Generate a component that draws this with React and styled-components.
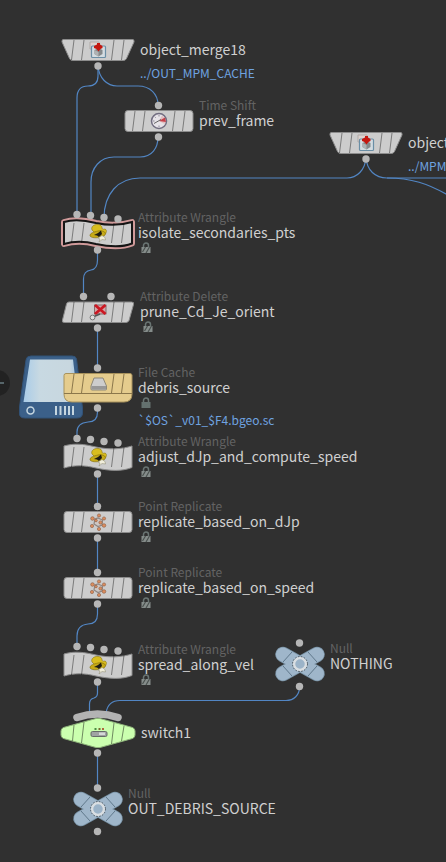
import React from 'react'
import styled, { createGlobalStyle } from 'styled-components'

const WIRES = [
  'M98 66V76Q98 86 88 86Q77 86 77 98V215',
  'M98 66C99 78 107 86 117 86H138C150 86 158 94 158 105',
  'M158 137C158 148 152 157 140 157H114C100 157 91 168 91 182V216',
  'M366 158C365 170 357 178 347 178H140C118 178 104 194 104 218',
  'M366 158C367 170 375 178 387 178H4000',
  'M387 178C412 178 428 184 446 194L640 300',
  'M97.5 250V260Q97.5 269 91 270Q83.5 271 83.5 279V296',
  'M97.5 328V367',
  'M97.5 407V412Q97.5 422 88 422Q77 423 77 432V438',
  'M97.5 474V506',
  'M97.5 538V572',
  'M97.5 604V614Q97.5 624 88 624Q77 625 77 636V646',
  'M97.5 681V693Q97.5 697 94 698Q89.5 699 89.5 704V713',
  'M299.5 687C299.5 695 294 700.5 286 700.5H120Q108 700.5 106 713',
  'M97.5 753V787',
]

const WAVE_DOTS = [[-20.5, -18.5], [-7, -17.5], [6.5, -15.5], [20.5, -14]]

// every shape is drawn round its own centre (0, 0)
const SHAPES = {
  merge: {
    width: 72,
    body: 'M-35 -10.5H35Q36.5 -10 36 -8L28.5 8.5Q27.5 10.5 25.5 10.5H-25.5Q-27.5 10.5 -28.5 8.5L-36 -8Q-36.5 -10 -35 -10.5Z',
    dots: [[0.5, 16]],
  },
  box: {
    width: 68,
    body: 'M-31 -10.5H31Q34 -10.5 34 -7.5V7.5Q34 10.5 31 10.5H-31Q-34 10.5 -34 7.5V-7.5Q-34 -10.5 -31 -10.5Z',
    dots: [[0, -15.5], [0, 16]],
  },
  wave: {
    width: 68,
    body: 'M-34 -11C-24 -14 -14 -13 -2 -10C12 -7 24 -8 34 -11V10.5C24 14.5 12 14 -2 11C-14 8 -24 8 -34 11Z',
    dots: [...WAVE_DOTS, [0, 17]],
  },
  slant: {
    width: 72,
    body: 'M-29 -10H33.5Q36.5 -10 35.5 -7.5L31 8.5Q30 10.5 28 10.5H-33.5Q-36.5 10.5 -35.5 8L-31.5 -8Q-31 -10 -29 -10Z',
    dots: [[-14, -15.5], [13.5, -15.5], [0, 16]],
  },
  cache: {
    width: 68,
    dots: [[0, -20], [0, 20]],
  },
  hex: {
    width: 74,
    body: 'M-2 -14.5H2L34.5 -5.5Q37 -4.5 37 -2V2Q37 4.5 34.5 5.5L2 14.5H-2L-34.5 5.5Q-37 4.5 -37 2V-2Q-37 -4.5 -34.5 -5.5Z',
    dots: [[0, 20]],
  },
  cross: {
    width: 48,
    dots: [[0, -21], [0, 22.5]],
  },
}

const NODES = [
  { x: 98, y: 50, shape: 'merge', icon: 'merge', name: 'object_merge18', file: '../OUT_MPM_CACHE' },
  { x: 159, y: 121, shape: 'box', icon: 'clock', kind: 'Time Shift', name: 'prev_frame' },
  { x: 366, y: 143, shape: 'merge', icon: 'merge', name: 'object_merge19', file: '../MPM_SURFACE' },
  { x: 98, y: 233, shape: 'wave', icon: 'wrangle', kind: 'Attribute Wrangle', name: 'isolate_secondaries_pts', lock: 'striped', selected: true },
  { x: 98, y: 312, shape: 'slant', icon: 'remove', kind: 'Attribute Delete', name: 'prune_Cd_Je_orient', lock: 'striped' },
  { x: 98, y: 388, shape: 'cache', kind: 'File Cache', name: 'debris_source', lock: 'solid', file: '`$OS`_v01_$F4.bgeo.sc' },
  { x: 98, y: 457, shape: 'wave', icon: 'wrangle', kind: 'Attribute Wrangle', name: 'adjust_dJp_and_compute_speed', lock: 'striped' },
  { x: 98, y: 522, shape: 'box', icon: 'points', kind: 'Point Replicate', name: 'replicate_based_on_dJp', lock: 'striped' },
  { x: 98, y: 588, shape: 'box', icon: 'points', kind: 'Point Replicate', name: 'replicate_based_on_speed', lock: 'striped' },
  { x: 98, y: 665, shape: 'wave', icon: 'wrangle', kind: 'Attribute Wrangle', name: 'spread_along_vel', lock: 'striped' },
  { x: 300, y: 664, shape: 'cross', kind: 'Null', name: 'NOTHING' },
  { x: 98, y: 733, shape: 'hex', icon: 'switch', name: 'switch1' },
  { x: 98, y: 809, shape: 'cross', kind: 'Null', name: 'OUT_DEBRIS_SOURCE' },
]

const Icon = ({ type }) => {
  switch (type) {
    case 'merge':
      return (
        <g>
          <path d="M-8 -8H1V-1H-8Z" fill="#dcd3cf" stroke="#b1aaa7" />
          <rect x="-6.5" y="-4" width="14" height="11.5" rx="1" fill="#d3dce1" stroke="#6a8ea5" strokeWidth="1.2" />
          <path d="M-3.500 0L0.5 -2L4.5 0V4L0.5 6.5L-3.5 4Z" fill="#85898b" />
          <path d="M-3.500 0L0.5 2V6.5L-3.5 4Z" fill="#aeb2b4" />
          <path d="M-1 -7H2V-5.500L4.500 -4V-2L2.500 -1L0.5 1.500L-1.500 -1L-4 -2V-4L-1 -5.500Z" fill="#c4170f" />
        </g>
      )
    case 'clock':
      return (
        <g>
          <circle r="7.5" fill="#e6e3e8" stroke="#716d80" strokeWidth="1.5" />
          <path d="M0 0L3 -5.5A6.3 6.3 0 0 1 5.5 3Z" fill="#e2bfc1" />
          <path d="M0 0L6 -3.500L7 1Z" fill="#c5404a" />
          <path d="M-5 2.500L2 -1.5" stroke="#666" />
          <path d="M0 -6V-4.5M-6 0H-4.5M0 6V4.5M-4.3 -4.3L-3.3 -3.3" stroke="#8d8996" />
        </g>
      )
    case 'wrangle':
      return (
        <g>
          <path d="M-6 -3C-8 -8 0 -10 3 -7.500C5 -5 3 -3 7 -4C10 -3 8 3 3 3L-3 0Z" fill="#d9bd1e" stroke="#88750f" strokeWidth="0.6" />
          <path d="M-8 3C-8.500 0 -4 -1 0 -2C4 -3 9 -1 7 2C4 5 -6 6 -8 3Z" fill="#c7aa17" stroke="#7d6a0c" strokeWidth="0.6" />
          <path d="M-4 2L0 0L3 -2.500L4 1L1 4L-1 2.500Z" fill="#1f1c12" />
          <path d="M0 5L4 2.500L7 4.500L7.500 7L4 6.5L1 9L2 6Z" fill="#f1eedb" stroke="#8b886f" strokeWidth="0.5" />
        </g>
      )
    case 'remove':
      return (
        <g>
          <rect x="-3.5" y="-7" width="11.500" height="9" fill="#d3a9aa" stroke="#74565a" strokeWidth="0.8" />
          <path d="M-3 -7L7.500 2M7.500 -7L-3 2" stroke="#cc1823" strokeWidth="2.8" />
          <path d="M-4 4.500L2 2" stroke="#555" strokeWidth="1.6" />
          <circle cx="-5.500" cy="5.5" r="2.4" fill="#ddd" stroke="#777" />
        </g>
      )
    case 'points':
      return (
        <g stroke="#8a5a41" strokeWidth="0.6">
          <path d="M0 -4L4.5 -2L4 3L0 4.5L-4 2L-3 -3Z" fill="#d0c8c4" stroke="#8f8580" strokeWidth="1.200" />
          <g fill="#dc8d5e">
            <circle cx="1" cy="-6.500" r="1.6" />
            <circle cx="-5.5" cy="-3.500" r="1.8" />
            <circle cx="6" cy="-3.500" r="1.6" />
            <circle cx="-6" cy="4" r="1.6" />
            <circle cx="6" cy="3.500" r="1.8" />
            <circle cx="1" cy="7" r="1.6" />
            <circle cx="2.500" cy="0.5" r="1.6" />
            <circle cx="-2" cy="-1.500" r="1.3" />
          </g>
        </g>
      )
    case 'switch':
      return (
        <g transform="translate(1 0)">
          <rect x="-8" y="-1.5" width="16" height="5" rx="1.5" fill="#9fa3a3" stroke="#656b68" />
          <path d="M0 -0.5H6V2H0Z" fill="#d5d8d8" />
          <path d="M-4.500 -4H-2.500" stroke="#4a8b42" strokeWidth="2" />
          <path d="M-0.5 -4H1.5" stroke="#7b6b31" strokeWidth="2" />
          <path d="M3 -4H5" stroke="#b0653e" strokeWidth="2" />
        </g>
      )
    default:
      return null
  }
}

const Ticks = () => (
  <path
    d="M-24 -10L-26.5 10M-14 -10L-16.5 10M16 -10L13.5 10M26 -10L23.5 10"
    stroke="#000"
    strokeOpacity="0.4"
  />
)

const CacheShape = () => (
  <g>
    <path
      d="M-67 -32H-26Q-22 -32 -21.5 -29L-15.500 20V25Q-15.500 30 -21 30H-73Q-79 30 -78.500 25V19L-72 -28Q-71.500 -32 -67 -32Z"
      fill="#3b6089"
      stroke="#315277"
    />
    <path d="M-68 -28.500H-25L-20 14H-74.500Z" fill="url(#driveLid)" />
    <circle cx="-67.500" cy="22.500" r="3.500" fill="none" stroke="#c5d6e0" strokeWidth="1.500" />
    <path d="M-42 18V27M-37.500 18V27M-33 18V27M-29 18V27M-25 18V27" stroke="#c5d6e0" strokeWidth="2" />
    <path
      d="M-32 -14.500H32Q34 -14.500 34 -12.500V6Q34 14 26 14H-26Q-34 14 -34 6V-12.500Q-34 -14.500 -32 -14.500Z"
      fill="#e5cc8d"
      stroke="#a8925c"
    />
    <path
      d="M-34 5.500H34M-24 -14L-26.500 5M-14 -14L-16.500 5M16 -14L13.500 5M26 -14L23.500 5"
      stroke="#8b774b"
      fill="none"
    />
    <path d="M-4 -10H5L8.500 -2V1Q8.500 2 7.500 2H-6Q-7 2 -7 1V-2Z" fill="#cdcdcd" stroke="#8d8878" />
    <path d="M-6.500 -2H8V1.500H-6.500Z" fill="#989898" />
  </g>
)

const CrossShape = () => (
  <g>
    <path d="M-17 -9.5L17 9.5M17 -9.5L-17 9.5" stroke="#7790a3" strokeWidth="15.500" strokeLinecap="round" />
    <path d="M-17 -9.5L17 9.5M17 -9.5L-17 9.5" stroke="#9fb6ca" strokeWidth="14" strokeLinecap="round" />
    <path d="M-17 -2L-8 -12M17 -2L8 -12M-17 2L-8 12M17 2L8 12" stroke="#60788b" />
    <circle r="6" fill="#9bb3c8" stroke="#d9dee2" strokeWidth="2.500" />
    <circle r="7.500" fill="none" stroke="#4a545c" strokeDasharray="1.500 1.500" />
  </g>
)

const Glyph = ({ node }) => {
  const shape = SHAPES[node.shape]
  const half = shape.width / 2
  return (
    <Shape width={shape.width} height="60" viewBox={`${-half} -30 ${shape.width} 60`} aria-hidden="true">
      {node.shape === 'cache' && <CacheShape />}
      {node.shape === 'cross' && <CrossShape />}
      {node.shape === 'hex' && (
        <>
          <path d="M-21 -15.500Q-0.5 -22.500 20 -15.500" fill="none" stroke="#b3b3b3" strokeWidth="7.500" strokeLinecap="round" />
          <path d={shape.body} fill="#cbffaf" stroke="#8eb37a" />
          <path d="M-24 -8L-25.500 8M-14 -11L-16.500 10M16 -10L13.500 11M26 -7L23.500 8" stroke="#6f8a60" />
        </>
      )}
      {shape.body && node.shape !== 'hex' && (
        <>
          {node.selected && (
            <path d={shape.body} stroke="#d09a9a" strokeWidth="6" strokeLinejoin="round" />
          )}
          <path
            d={shape.body}
            fill="#cccccc"
            stroke={node.selected ? '#151515' : '#8c8c8c'}
            strokeWidth={node.selected ? 2 : 1}
          />
          <Ticks />
        </>
      )}
      <Icon type={node.icon} />
      {shape.dots.map(([x, y]) => (
        <circle key={`${x},${y}`} cx={x - 0.5} cy={y} r="3.700" fill="#b6b6b6" />
      ))}
    </Shape>
  )
}

const Lock = ({ type }) => (
  <LockIcon viewBox="0 0 10 12" aria-hidden="true">
    <path d="M2.500 6V3.500A2.500 2.500 0 0 1 7.500 3.500V6" fill="none" stroke="#6a7573" strokeWidth="1.500" />
    <rect x="0.500" y="5" width="9" height="6" fill={type === 'solid' ? '#64716f' : '#858c8a'} />
    {type === 'striped' && <path d="M1.500 10L4.500 5M5 11L8.500 5" stroke="#4a514f" strokeWidth="1.200" />}
  </LockIcon>
)

const NetworkNode = ({ node }) => (
  <Node $left={node.x - SHAPES[node.shape].width / 2} $top={node.y - 30}>
    <Glyph node={node} />
    <Labels>
      <Kind>{node.kind}</Kind>
      <Name>{node.name}</Name>
      {node.lock && <Lock type={node.lock} />}
      {node.file && <FileName $spaced={!node.lock}>{node.file}</FileName>}
    </Labels>
  </Node>
)

const App = () => {
  return (
    <>
      <GlobalStyle />
      <Canvas>
        <Wires aria-hidden="true">
          <defs>
            <linearGradient id="driveLid">
              <stop offset="0" stopColor="#a9cce8" />
              <stop offset="0.3" stopColor="#c8d9e2" />
              <stop offset="0.85" stopColor="#c8d7df" />
              <stop offset="1" stopColor="#9cc3e4" />
            </linearGradient>
          </defs>
          <circle cx="-3" cy="383" r="13" fill="#222222" />
          <path d="M-8 383H4" stroke="#56656a" strokeWidth="2" />
          {WIRES.map((d) => (
            <path key={d} d={d} fill="none" stroke="#5286c4" strokeWidth="1.200" />
          ))}
        </Wires>
        {NODES.map((node) => (
          <NetworkNode key={node.name} node={node} />
        ))}
      </Canvas>
    </>
  )
}

export default App

//style
const GlobalStyle = createGlobalStyle`
  body {
    margin: 0;
    background-color: #303030;
    font-family: 'Noto Sans CJK SC', 'Noto Sans', sans-serif;
  }
`

const Canvas = styled.main`
  position: relative;
  min-height: 100vh;
  overflow: hidden;
  background-color: #303030;
`

const Wires = styled.svg`
  position: absolute;
  inset: 0;
  width: 100%;
  height: 100%;
`

const Node = styled.div`
  position: absolute;
  left: ${({ $left }) => $left}px;
  top: ${({ $top }) => $top}px;
  display: flex;
  align-items: flex-start;
  gap: 6px;
  white-space: nowrap;
`

const Shape = styled.svg`
  flex: none;
  overflow: visible;
`

const Labels = styled.div`
  display: flex;
  flex-direction: column;
  padding-top: 6px;
`

const Kind = styled.div`
  height: 15px;
  line-height: 15px;
  font-size: 12px;
  color: #636363;
`

const Name = styled.div`
  height: 16px;
  line-height: 16px;
  font-size: 14px;
  color: #d0d0d0;
`

const LockIcon = styled.svg`
  width: 10px;
  height: 12px;
  margin: 2px 3px;
`

const FileName = styled.div`
  margin-top: ${({ $spaced }) => ($spaced ? 7 : 0)}px;
  line-height: 18px;
  font-size: 12px;
  color: #6fa3e0;
`
